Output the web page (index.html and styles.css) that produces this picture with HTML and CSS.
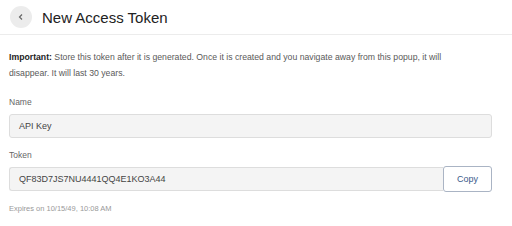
FILE: index.html
```html
<!DOCTYPE html>
<html lang="en">
<head>
    <meta charset="UTF-8">
    <title>New Access Token</title>
    <link rel="stylesheet" href="styles.css">
</head>
<body>
    <!-- Header -->
    <div class="header">
        <button class="back-btn" aria-label="Back">
            <svg width="8" height="8" viewBox="0 0 8 8"><path d="M5 1.5 L2.5 4 L5 6.5" fill="none" stroke="#666" stroke-width="1.2"/></svg>
        </button>
        <h1>New Access Token</h1>
    </div>

    <div class="content">
        <p class="notice"><strong>Important:</strong> Store this token after it is generated. Once it is created and you navigate away from this popup, it will disappear. It will last 30 years.</p>

        <div class="field">
            <label>Name</label>
            <div class="input">API Key</div>
        </div>

        <div class="field">
            <label>Token</label>
            <div class="token-row">
                <div class="input">QF83D7JS7NU4441QQ4E1KO3A44</div>
                <button class="copy-btn">Copy</button>
            </div>
        </div>

        <div class="expires">Expires on 10/15/49, 10:08 AM</div>
    </div>
</body>
</html>
```

FILE: styles.css
```css
body {
    margin: 0;
    font-family: "Liberation Sans", Arial, sans-serif;
    background: #ffffff;
    color: #333333;
}
.header {
    display: flex;
    align-items: center;
    height: 35px;
    padding: 0 10px;
    border-bottom: 1px solid #ececec;
    box-sizing: border-box;
}
.back-btn {
    width: 22px;
    height: 22px;
    border-radius: 50%;
    border: none;
    background: #ececec;
    padding: 0;
    display: flex;
    align-items: center;
    justify-content: center;
    margin-right: 10px;
}
h1 {
    margin: 0;
    font-size: 15px;
    font-weight: normal;
    color: #222222;
}
.content {
    padding: 14px 20px 0 9px;
}
.notice {
    margin: 0 0 16px;
    max-width: 460px;
    font-size: 8.7px;
    line-height: 16px;
    color: #5a5a5a;
}
.notice strong {
    color: #222222;
}
.field {
    margin-bottom: 12px;
}
label {
    display: block;
    font-size: 8.5px;
    color: #666666;
    margin-bottom: 7px;
}
.input {
    flex: 1;
    height: 24px;
    line-height: 22px;
    box-sizing: border-box;
    padding: 0 9px;
    background: #f4f4f4;
    border: 1px solid #dddddd;
    border-radius: 3px;
    font-size: 9px;
    color: #444444;
}
.token-row {
    display: flex;
}
.token-row .input {
    border-radius: 3px 0 0 3px;
    border-right: none;
}
.copy-btn {
    width: 49px;
    height: 26px;
    margin-top: -1px;
    background: #ffffff;
    border: 1px solid #aab4c4;
    border-radius: 3px;
    font-family: inherit;
    font-size: 9px;
    color: #3a5a8a;
    padding: 0;
}
.expires {
    margin-top: 7px;
    font-size: 7.5px;
    color: #999999;
}
```
